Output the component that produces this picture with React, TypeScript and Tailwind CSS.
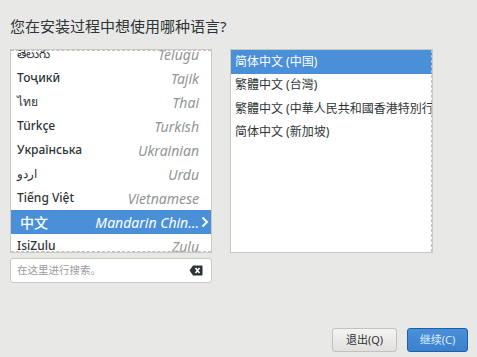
import React from 'react'

const LANGS: { native: string; english: string; selected?: boolean }[] = [
  { native: 'తెలుగు', english: 'Telugu' },
  { native: 'Тоҷикӣ', english: 'Tajik' },
  { native: 'ไทย', english: 'Thai' },
  { native: 'Türkçe', english: 'Turkish' },
  { native: 'Українська', english: 'Ukrainian' },
  { native: 'اردو', english: 'Urdu' },
  { native: 'Tiếng Việt', english: 'Vietnamese' },
  { native: '中文', english: 'Mandarin Chin…', selected: true },
  { native: 'IsiZulu', english: 'Zulu' },
]

const LOCALES = ['简体中文 (中国)', '繁體中文 (台灣)', '繁體中文 (中華人民共和國香港特別行政區)', '简体中文 (新加坡)']

const FONT = { fontFamily: '"Noto Sans", "Noto Sans CJK SC", sans-serif' }

function LangRow({ lang }: { lang: (typeof LANGS)[number] }) {
  return (
    <div
      className={`h-[24px] flex items-center pl-[6px] pr-[12px] ${
        lang.selected ? 'bg-[#4a90d9] text-white' : 'text-[#2e3436]'
      }`}
    >
      <span className={`flex-1 whitespace-nowrap font-medium ${lang.selected ? 'text-[14px] pl-[3px]' : 'text-[12px]'}`}>
        {lang.native}
      </span>
      <span className={`italic whitespace-nowrap text-[14px] ${lang.selected ? 'text-white' : 'text-[#929595]'}`}>
        {lang.english}
      </span>
      {lang.selected && (
        <svg width="8" height="12" viewBox="0 0 8 12" className="ml-[2px] -mr-[10px]">
          <path d="M1.5 1.5 L6 6 L1.5 10.5" stroke="white" strokeWidth="2" fill="none" />
        </svg>
      )}
    </div>
  )
}

export default function App() {
  return (
    <div className="w-[477px] h-[357px] bg-[#e8e8e7] relative overflow-hidden" style={FONT}>
      <div className="pt-[16px] pl-[10px] text-[15px] text-[#2e3436] leading-[20px]">您在安装过程中想使用哪种语言?</div>

      <div className="flex gap-[18px] pl-[10px] mt-[13px]">
        {/* Left: languages */}
        <div className="w-[202px]">
          <div className="relative h-[204px] bg-white border border-[#cdc7c2] overflow-hidden">
            <div className="-mt-[8px]">
              {LANGS.map(l => (
                <LangRow key={l.english} lang={l} />
              ))}
            </div>
            <div className="absolute top-0 left-0 right-0 border-t border-dashed border-[#c0c0c0]" />
            <div className="absolute bottom-0 left-0 right-0 border-b border-dashed border-[#c0c0c0]" />
          </div>
          <div className="mt-[5px] h-[25px] bg-white border border-[#cdc7c2] rounded-[3px] flex items-center pl-[6px] pr-[8px]">
            <span className="flex-1 text-[10.5px] text-[#9a9c9c]">在这里进行搜索。</span>
            <svg width="14" height="11" viewBox="0 0 14 11">
              <path d="M4 0.5 H13 A1 1 0 0 1 13.5 1.5 V9.5 A1 1 0 0 1 13 10.5 H4 L0.5 5.5 Z" fill="#2e3436" />
              <path d="M6.5 3 L10.5 8 M10.5 3 L6.5 8" stroke="white" strokeWidth="1.6" />
            </svg>
          </div>
        </div>

        {/* Right: locales */}
        <div className="relative w-[203px] h-[204px] bg-white border border-[#cdc7c2] overflow-hidden">
          {LOCALES.map((l, i) => (
            <div
              key={l}
              className={`h-[23.5px] flex items-center pl-[4px] text-[12px] whitespace-nowrap ${
                i === 0 ? 'bg-[#4a90d9] text-white' : 'text-[#2e3436]'
              }`}
            >
              {l}
            </div>
          ))}
          <div className="absolute top-0 bottom-0 right-0 border-r border-dashed border-[#c0c0c0]" />
        </div>
      </div>

      <div className="absolute left-[332px] top-[328px] flex gap-[10px]">
        <button className="w-[65px] h-[24px] rounded-[3px] border border-[#c4c0bb] bg-gradient-to-b from-[#f4f4f3] to-[#e2e0de] text-[11px] text-[#2e3436]">
          退出(Q)
        </button>
        <button className="w-[61px] h-[24px] rounded-[3px] border border-[#1d5ea8] bg-gradient-to-b from-[#4a90d9] to-[#3a80cc] text-[11px] text-[#dce9f7]">
          继续(C)
        </button>
      </div>
    </div>
  )
}
